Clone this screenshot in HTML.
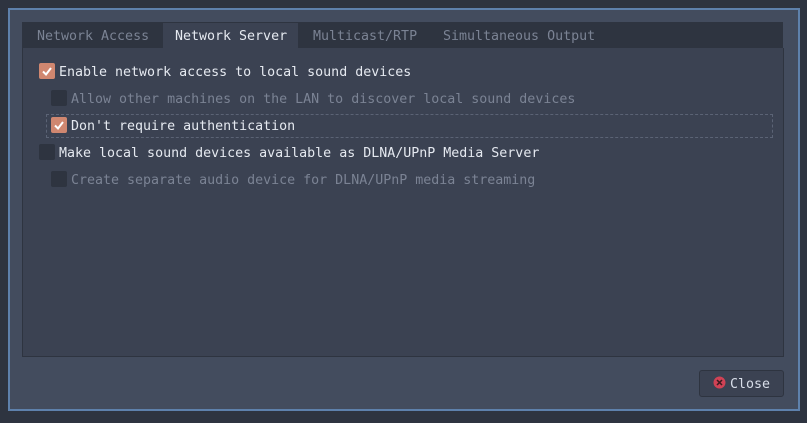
<!DOCTYPE html><html><head><style>
body{margin:0;width:807px;height:423px;background:#2e3440;position:relative;overflow:hidden;font-family:"DejaVu Sans Mono","Liberation Mono",monospace;font-size:13.3px;}
.a{position:absolute}
.win{left:8px;top:8px;width:788px;height:399px;background:#434c5e;border:2px solid #5e81ac}
.bar{left:22px;top:22px;width:761px;height:26px;background:#2e3440}
.panel{left:22px;top:48px;width:760px;height:308px;background:#3b4252;border:1px solid #2e3440;border-top:none}
.tab{top:29px;color:#7b8394;white-space:pre}
.act{left:162px;top:22px;width:137px;height:27px;background:#3b4252;border:1px solid #2e3440;border-bottom:none;box-sizing:border-box}
.cb{width:16px;height:16px;border-radius:2px;background:#d08770}
.cb.off{background:#2e3440}
.t{color:#e5e9f0;white-space:pre;line-height:16px}
.d{color:#7b8394}
</style></head><body>
<div class="a win"></div>
<div class="a bar"></div>
<div class="a act"></div>
<div class="a panel"></div>
<div class="a tab" style="left:37px">Network Access</div>
<div class="a tab" style="left:175px;color:#e5e9f0">Network Server</div>
<div class="a tab" style="left:313px">Multicast/RTP</div>
<div class="a tab" style="left:443px">Simultaneous Output</div>
<div class="a" style="left:46px;top:114px;width:725px;height:22px;border:1px dashed #5b6375"></div>
<div class="a cb" style="left:39px;top:63px"><svg width="16" height="16"><path d="M4 8.5l3 3 5-6.5" stroke="#fff" stroke-width="2" fill="none"/></svg></div>
<div class="a t" style="left:59px;top:65px">Enable network access to local sound devices</div>
<div class="a cb off" style="left:51px;top:90px"></div>
<div class="a t d" style="left:71px;top:92px">Allow other machines on the LAN to discover local sound devices</div>
<div class="a cb" style="left:51px;top:117px"><svg width="16" height="16"><path d="M4 8.5l3 3 5-6.5" stroke="#fff" stroke-width="2" fill="none"/></svg></div>
<div class="a t" style="left:71px;top:119px">Don't require authentication</div>
<div class="a cb off" style="left:39px;top:144px"></div>
<div class="a t" style="left:59px;top:146px">Make local sound devices available as DLNA/UPnP Media Server</div>
<div class="a cb off" style="left:51px;top:171px"></div>
<div class="a t d" style="left:71px;top:173px">Create separate audio device for DLNA/UPnP media streaming</div>
<div class="a" style="left:699px;top:370px;width:83px;height:25px;background:#3b4252;border:1px solid #2e3440;border-radius:3px"></div>
<svg class="a" style="left:713px;top:376px" width="13" height="13"><circle cx="6.5" cy="6.5" r="6" fill="#d04255"/><path d="M4 4l5 5M9 4l-5 5" stroke="#3b1a20" stroke-width="1.5"/></svg>
<div class="a t" style="left:730px;top:377px;color:#d8dee9">Close</div>
</body></html>
